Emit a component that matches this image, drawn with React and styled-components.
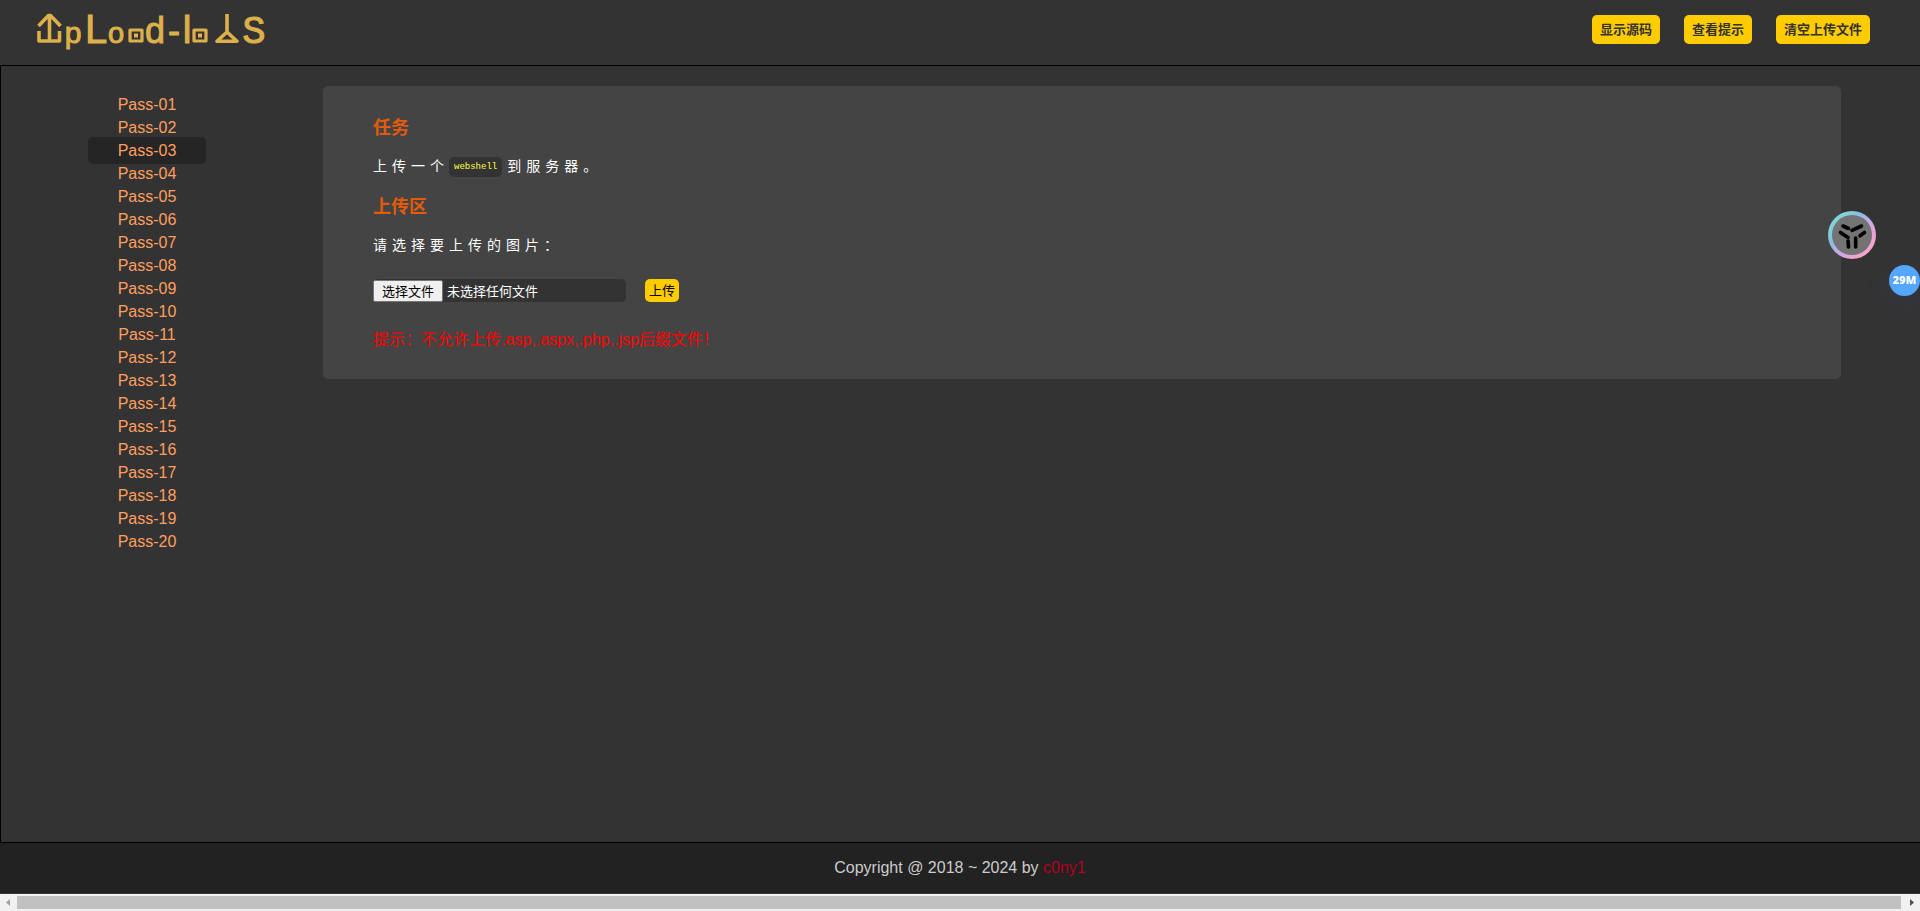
import { useState } from 'react';
import { styled, createGlobalStyle } from 'styled-components';

const GlobalStyle = createGlobalStyle`
  * {
    box-sizing: border-box;
  }
  body {
    margin: 0;
    background: #333;
    font-family: 'Liberation Sans', 'Noto Sans CJK SC', sans-serif;
    font-size: 16px;
  }
  h3, p, ul {
    margin: 0;
    padding: 0;
  }
  a {
    text-decoration: none;
  }
`;

const Page = styled.div`
  display: flex;
  flex-direction: column;
  min-height: 100vh;
`;

const Header = styled.header`
  display: flex;
  justify-content: space-between;
  align-items: flex-start;
  height: 65px;
  padding: 0 50px 0 36px;
`;

const Logo = styled.svg`
  display: block;
  width: 232px;
  height: 56px;
  font-family: 'Liberation Sans', sans-serif;
  fill: #dcb04a;
`;

const Actions = styled.div`
  display: flex;
  gap: 24px;
  padding-top: 15px;
`;

const YellowButton = styled.button`
  height: ${(props) => (props.$small ? '23px' : '29px')};
  padding: 0 ${(props) => (props.$small ? '4px' : '8px')} 2px;
  border: 0;
  border-radius: 5px;
  background: #fc0;
  color: ${(props) => (props.$small ? '#000' : '#333')};
  font-family: 'Noto Sans CJK SC', sans-serif;
  font-size: 13px;
  font-weight: ${(props) => (props.$small ? 400 : 700)};
  line-height: 20px;
  cursor: pointer;
`;

const Main = styled.main`
  flex: 1;
  display: flex;
  align-items: flex-start;
  border: 1px solid #000;
  border-right: 0;
  padding: 20px 79px 20px 0;
`;

const Sidebar = styled.nav`
  flex: 0 0 322px;
  padding: 7px 0 0 87px;
`;

const Menu = styled.ul`
  width: 118px;
  list-style: none;
  & li {
    display: flex;
    align-items: center;
    height: 23px;
  }
`;

const PassLink = styled.a`
  flex: 1;
  border-radius: 5px;
  background: ${(props) => (props.$active ? '#252525' : 'transparent')};
  color: #ff9f5f;
  line-height: 27px;
  text-align: center;
`;

const Panel = styled.section`
  flex: 1;
  padding: 28px 50px 26px;
  border-radius: 5px;
  background: #444;
`;

const Title = styled.h3`
  color: #e35b0a;
  font-size: 18px;
  line-height: 28px;
`;

const Text = styled.p`
  padding: 11px 0 13px;
  color: #fff;
  font-size: 14px;
  line-height: 27px;
  letter-spacing: 5px;
  & code {
    display: inline-block;
    padding: 0 5px;
    border-radius: 5px;
    background: #333;
    color: #ff4;
    font-family: 'Liberation Mono', monospace;
    font-size: 9px;
    line-height: 20px;
    letter-spacing: 0;
    vertical-align: middle;
    margin-right: 5px;
  }
`;

const Form = styled.form`
  display: flex;
  align-items: center;
  gap: 19px;
  padding-top: 7px;
`;

const FileField = styled.label`
  position: relative;
  display: flex;
  align-items: center;
  gap: 4px;
  width: 253px;
  height: 23px;
  border-radius: 5px;
  background: #333;
  color: #fff;
  font-family: 'Noto Sans CJK SC', sans-serif;
  font-size: 13px;
  line-height: 20px;
  & input {
    position: absolute;
    inset: 0;
    width: 100%;
    opacity: 0;
    cursor: pointer;
  }
`;

const Choose = styled.span`
  padding: 0 8px;
  border: 1px solid #767676;
  border-radius: 2px;
  background: #efefef;
  color: #000;
`;

const Hint = styled.p`
  padding-top: 24px;
  color: #f00;
  line-height: 27px;
`;

const Footer = styled.footer`
  height: 51px;
  border-bottom: 1px solid #333;
  background: #222;
  color: #ccc;
  line-height: 50px;
  text-align: center;
  & a {
    color: #b3001e;
  }
`;

const ScrollTrack = styled.div`
  display: flex;
  align-items: center;
  height: 17px;
  background: #f1f1f1;
  & svg {
    flex: none;
  }
`;

const ScrollThumb = styled.div`
  flex: 1;
  height: 13px;
  background: #c1c1c1;
`;

const Assistant = styled.button`
  position: fixed;
  top: 211px;
  right: 44px;
  width: 48px;
  height: 48px;
  padding: 4px;
  border: 0;
  border-radius: 50%;
  background: linear-gradient(135deg, #7fd8d8 15%, #86bfe0 35%, #c5aaea 55%, #f0a2d0 75%, #f5b0c0);
  & svg {
    display: block;
    border-radius: 50%;
    background: #737373;
  }
`;

const MemoryBadge = styled.div`
  position: fixed;
  top: 265px;
  right: 0;
  width: 31px;
  height: 31px;
  border-radius: 50%;
  background: #55a6ff;
  box-shadow: 0 4px 24px rgba(60, 80, 160, 0.2);
  color: #fff;
  font-family: 'Open Sans', sans-serif;
  font-size: 11px;
  font-weight: 800;
  line-height: 30px;
  text-align: center;
`;

const passes = Array.from({ length: 20 }, (_, i) => String(i + 1).padStart(2, '0'));

const UploadLogo = () => (
  <Logo viewBox="36 0 232 56" role="img" aria-label="Upload-labs">
    <g fill="none" stroke="#dcb04a" strokeWidth="3.6" strokeLinejoin="round">
      <path d="M49.500 41V16M38.500 26L48.500 15.500H50.500L60.500 26M39 31V41H59.500V31" />
      <path d="M130 30H142V41H130Z" strokeWidth="3.200" />
      <path d="M194 30H206V41H194Z" strokeWidth="3.200" />
      <path d="M227 14V32M227 32L217 41.200H237Z" />
    </g>
    <rect x="134" y="33.500" width="4" height="4" />
    <rect x="198" y="33.500" width="4" height="4" />
    <g textAnchor="middle" stroke="#dcb04a">
      <text x="73" y="43" fontSize="30">p</text>
      <text x="96" y="43" fontSize="40">L</text>
      <text x="116" y="43" fontSize="29">o</text>
      <text x="155" y="43" fontSize="36">d</text>
      <text x="174" y="43" fontSize="36">-</text>
      <text x="187" y="43" fontSize="39">l</text>
      <text x="254" y="43" fontSize="39" fontFamily="Liberation Mono">S</text>
    </g>
  </Logo>
);

const App = () => {
  const [fileName, setFileName] = useState('');

  return (
    <Page>
      <GlobalStyle />
      <Header>
        <UploadLogo />
        <Actions>
          <YellowButton type="button">显示源码</YellowButton>
          <YellowButton type="button">查看提示</YellowButton>
          <YellowButton type="button">清空上传文件</YellowButton>
        </Actions>
      </Header>
      <Main>
        <Sidebar>
          <Menu>
            {passes.map((pass) => (
              <li key={pass}>
                <PassLink href={`#pass-${pass}`} $active={pass === '03'}>Pass-{pass}</PassLink>
              </li>
            ))}
          </Menu>
        </Sidebar>
        <Panel>
          <Title>任务</Title>
          <Text>上传一个<code>webshell</code>到服务器。</Text>
          <Title>上传区</Title>
          <Text>请选择要上传的图片：</Text>
          <Form onSubmit={(e) => e.preventDefault()}>
            <FileField>
              <Choose>选择文件</Choose>
              <span>{fileName || '未选择任何文件'}</span>
              <input type="file" onChange={(e) => setFileName(e.target.files[0]?.name ?? '')} />
            </FileField>
            <YellowButton type="submit" $small>上传</YellowButton>
          </Form>
          <Hint>提示：不允许上传.asp,.aspx,.php,.jsp后缀文件！</Hint>
        </Panel>
      </Main>
      <Footer>
        Copyright @ 2018 ~ 2024 by <a href="#c0ny1">c0ny1</a>
      </Footer>
      <ScrollTrack aria-hidden="true">
        <svg width="17" height="17"><path d="M10 5V12L6 8.500Z" fill="#a3a3a3" /></svg>
        <ScrollThumb />
        <svg width="19" height="17"><path d="M9 5V12L13 8.500Z" fill="#505050" /></svg>
      </ScrollTrack>
      <Assistant type="button" aria-label="Assistant">
        <svg width="40" height="40" viewBox="0 0 40 40" fill="none" stroke="#000" strokeWidth="3.6" strokeLinecap="round">
          <path d="M11 11L16.500 13.500M20 15.300L29.500 11M8.500 17.500L16 22.500M32.500 17.500L28 20.800M16 26L16.500 32M23.700 32V23" />
        </svg>
      </Assistant>
      <MemoryBadge>29M</MemoryBadge>
    </Page>
  );
};

export default App;
